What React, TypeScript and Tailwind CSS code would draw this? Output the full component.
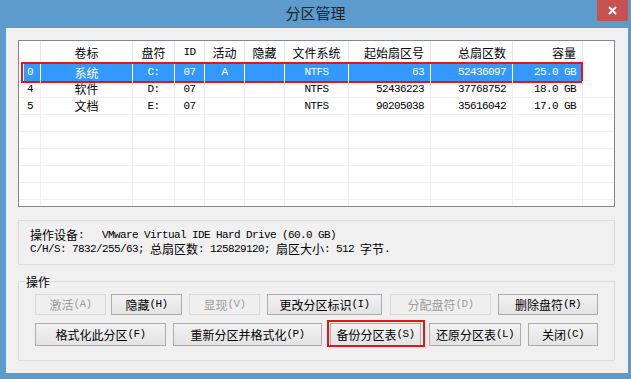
import React from 'react';

const CJK = /[\u2E80-\u9FFF\uFF00-\uFFEF\u3000-\u303F]/;

// mixed SimSun-like text: CJK at 12px, ASCII in a 6px mono cell
const Mixed = ({ text }: { text: string }) => {
  const runs: { cjk: boolean; s: string }[] = [];
  for (const ch of text) {
    const c = CJK.test(ch);
    const last = runs[runs.length - 1];
    if (last && last.cjk === c) last.s += ch;
    else runs.push({ cjk: c, s: ch });
  }
  return (
    <>
      {runs.map((r, i) =>
        r.cjk ? (
          <span key={i} className="font-['Noto_Sans_CJK_SC',sans-serif] text-[12px]">{r.s}</span>
        ) : (
          <span key={i} className="font-['Liberation_Mono',monospace] text-[11px] tracking-[-0.6px] whitespace-pre">{r.s}</span>
        )
      )}
    </>
  );
};

const cols = [
  { w: 'w-[22px]', align: 'justify-start pl-[8px]', head: '' },
  { w: 'w-[92px]', align: 'justify-center', head: '卷标' },
  { w: 'w-[42px]', align: 'justify-center', head: '盘符' },
  { w: 'w-[30px]', align: 'justify-center', head: 'ID' },
  { w: 'w-[40px]', align: 'justify-center', head: '活动' },
  { w: 'w-[40px]', align: 'justify-center', head: '隐藏' },
  { w: 'w-[64px]', align: 'justify-center', head: '文件系统' },
  { w: 'w-[82px]', align: 'justify-end pr-[6px]', head: '起始扇区号' },
  { w: 'w-[82px]', align: 'justify-end pr-[6px]', head: '总扇区数' },
  { w: 'w-[70px]', align: 'justify-end pr-[6px]', head: '容量' },
];

const rows = [
  ['0', '系统', 'C:', '07', 'A', '', 'NTFS', '63', '52436097', '25.0 GB'],
  ['4', '软件', 'D:', '07', '', '', 'NTFS', '52436223', '37768752', '18.0 GB'],
  ['5', '文档', 'E:', '07', '', '', 'NTFS', '90205038', '35616042', '17.0 GB'],
];

const Btn = ({ label, w, disabled }: { label: string; w: string; disabled?: boolean }) => (
  <div
    className={`${w} h-full flex items-center justify-center border ${
      disabled
        ? 'border-[#d9d9d9] bg-[#efefef] text-[#9d9d9d]'
        : 'border-[#acacac] bg-linear-to-b from-[#f2f2f2] to-[#e3e3e3] text-black'
    } leading-none`}
  >
    <Mixed text={label} />
  </div>
);

export default function App() {
  return (
    <div className="w-[631px] h-[379px] bg-[#5c9bcc] flex flex-col overflow-hidden">
      {/* title bar */}
      <div className="h-[28px] relative flex items-start justify-center pt-[3px]">
        <span className="font-['Noto_Sans_CJK_SC',sans-serif] text-[15px] leading-[20px] text-[#1f2328]">分区管理</span>
        <div className="absolute top-0 right-[3px] w-[31px] h-[21px] bg-[#c75050] flex items-center justify-center">
          <svg width="9" height="9" viewBox="0 0 9 9">
            <path d="M1 1L8 8M8 1L1 8" stroke="white" strokeWidth="2" />
          </svg>
        </div>
      </div>

      {/* client */}
      <div className="ml-[6px] mr-[3px] h-[345px] bg-[#f0f0f0] pt-[12px] pl-[12px] pr-[13px] flex flex-col text-black">
        {/* list view */}
        <div className="h-[167px] border border-[#828790] bg-white flex flex-col">
          <div className="h-[23px] flex shrink-0">
            {cols.map((c, i) => (
              <div key={i} className={`${c.w} h-full flex items-center ${c.align} border-r border-[#e5e5e5] leading-none`}>
                <Mixed text={c.head} />
              </div>
            ))}
            <div className="flex-1" />
          </div>
          {rows.map((r, ri) => {
            const sel = ri === 0;
            return (
              <div key={ri} className="h-[17px] flex shrink-0 relative">
                {cols.map((c, i) =>
                  i === 0 ? (
                    <div key={i} className={`${c.w} h-full flex border-r ${sel ? 'border-white pl-[5px]' : 'border-[#f0f0f0] border-b'}`}>
                      <div className={`flex-1 flex items-center leading-none ${sel ? 'bg-[#3399ff] text-white pl-[3px]' : 'pl-[8px]'}`}>
                        <Mixed text={r[i]} />
                      </div>
                    </div>
                  ) : (
                    <div
                      key={i}
                      className={`${c.w} h-full flex items-center ${c.align} border-r leading-none ${
                        sel ? 'bg-[#3399ff] text-white border-white' : 'border-[#f0f0f0] border-b'
                      }`}
                    >
                      <Mixed text={r[i]} />
                    </div>
                  )
                )}
                <div className={`flex-1 ${sel ? '' : 'border-b border-[#f0f0f0]'}`} />
                {sel && <span className="absolute left-[2px] -top-[2px] -bottom-[2px] w-[562px] border-[2px] border-[#ee1111]" />}
              </div>
            );
          })}
          {[0, 1, 2, 3, 4, 5].map((k) => (
            <div key={k} className={`${k === 5 ? 'flex-1' : 'h-[17px] border-b border-[#f0f0f0]'} flex shrink-0`}>
              {cols.map((c, i) => (
                <div key={i} className={`${c.w} h-full border-r border-[#f0f0f0]`} />
              ))}
            </div>
          ))}
        </div>

        {/* device info */}
        <div className="mt-[13px] h-[45px] border border-[#dcdcdc] pl-[11px] pt-[7px] flex flex-col">
          <div className="h-[14px] flex items-center whitespace-pre leading-none">
            <Mixed text="操作设备:   VMware Virtual IDE Hard Drive (60.0 GB)" />
          </div>
          <div className="h-[14px] flex items-center whitespace-pre leading-none">
            <Mixed text="C/H/S: 7832/255/63; 总扇区数: 125829120; 扇区大小: 512 字节." />
          </div>
        </div>

        {/* operations */}
        <div className="mt-[16px] h-[80px] border border-[#dcdcdc] relative pl-[16px] pt-[12px] flex flex-col">
          <span className="absolute -top-[8px] left-[6px] px-[1px] bg-[#f0f0f0] leading-[14px]">
            <Mixed text="操作" />
          </span>
          <div className="h-[21px] flex">
            <Btn label="激活(A)" w="w-[71px]" disabled />
            <div className="w-[5px]" />
            <Btn label="隐藏(H)" w="w-[71px]" />
            <div className="w-[7px]" />
            <Btn label="显现(V)" w="w-[71px]" disabled />
            <div className="w-[7px]" />
            <Btn label="更改分区标识(I)" w="w-[115px]" />
            <div className="w-[8px]" />
            <Btn label="分配盘符(D)" w="w-[101px]" disabled />
            <div className="w-[7px]" />
            <Btn label="删除盘符(R)" w="w-[100px]" />
          </div>
          <div className="h-[23px] mt-[8px] flex">
            <Btn label="格式化此分区(F)" w="w-[131px]" />
            <div className="w-[7px]" />
            <Btn label="重新分区并格式化(P)" w="w-[149px]" />
            <div className="w-[8px]" />
            <div className="relative h-full">
              <Btn label="备份分区表(S)" w="w-[91px]" />
              <span className="absolute -left-[3px] -right-[4px] -top-[3px] -bottom-[1px] border-[2px] border-[#ee1111]" />
            </div>
            <div className="w-[8px]" />
            <Btn label="还原分区表(L)" w="w-[92px]" />
            <div className="w-[7px]" />
            <Btn label="关闭(C)" w="w-[70px]" />
          </div>
        </div>
      </div>
    </div>
  );
}
